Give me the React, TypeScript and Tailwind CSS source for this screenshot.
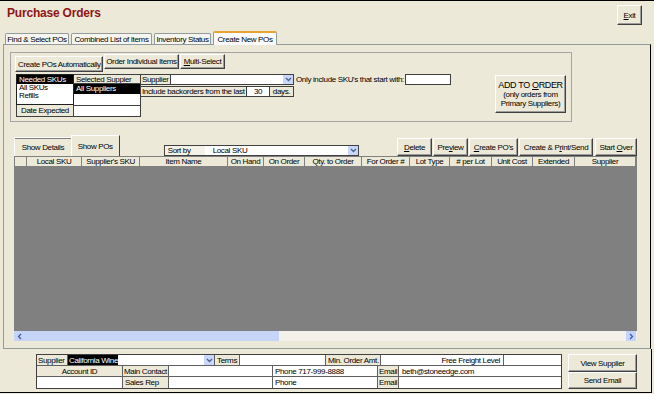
import React from 'react';

const raised =
  'border border-t-white border-l-white border-r-[#404040] border-b-[#404040] shadow-[inset_-1px_-1px_0_#9d9d9d]';

const Chevron = () => (
  <span className="w-[10px] h-full bg-[#C9D8FA] flex items-center justify-center shrink-0">
    <svg width="7" height="5" viewBox="0 0 7 5">
      <path d="M1 1l2.5 2.5L6 1" stroke="#4D6185" strokeWidth="1.3" fill="none" />
    </svg>
  </span>
);

const columns: [string, number][] = [
  ['', 12],
  ['Local SKU', 55],
  ["Supplier's SKU", 58],
  ['Item Name', 88],
  ['On Hand', 36],
  ['On Order', 41],
  ['Qty. to Order', 57],
  ['For Order #', 48],
  ['Lot Type', 40],
  ['# per Lot', 42],
  ['Unit Cost', 41],
  ['Extended', 42],
  ['Supplier', 63],
];

const MainTab = ({ label, w, active }: { label: string; w: number; active?: boolean }) =>
  active ? (
    <div
      style={{ width: w }}
      className="relative z-10 -mb-px h-[14px] bg-[#FCFCFE] border border-[#919B9C] border-b-0 border-t-2 border-t-[#E6A532] rounded-t-[2px] flex items-center justify-center"
    >
      {label}
    </div>
  ) : (
    <div
      style={{ width: w }}
      className="h-[11px] bg-[#F6F5F0] border border-[#919B9C] border-b-0 rounded-t-[2px] flex items-center justify-center"
    >
      {label}
    </div>
  );

const Btn = ({ w, h, children, className = '' }: { w: number; h: number; children: React.ReactNode; className?: string }) => (
  <div
    style={{ width: w, height: h }}
    className={`${raised} bg-[#ECE9D8] flex flex-col items-center justify-center leading-[9px] ${className}`}
  >
    {children}
  </div>
);

export default function App() {
  return (
    <div className="w-[654px] h-[394px] bg-[#ECE9D8] border-t border-black overflow-hidden whitespace-nowrap text-black text-[8px] leading-[9px] font-['Liberation_Sans',Arial,sans-serif] tracking-[-0.35px]">
      {/* Title bar */}
      <div className="flex h-[30px]">
        <div className="pl-[7px] pt-[5px] text-[12px] leading-[14px] font-bold text-[#8f1515] tracking-[-0.2px]">
          Purchase Orders
        </div>
        <div className={`${raised} ml-auto mt-[4px] mr-[12px] w-[25px] h-[20px] flex items-center justify-center`}>
          <span>
            <u>E</u>xit
          </span>
        </div>
      </div>

      {/* Main tabs */}
      <div className="flex items-end h-[13px] pl-[5px] gap-[2px]">
        <MainTab label="Find & Select POs" w={64} />
        <MainTab label="Combined List of Items" w={81} />
        <MainTab label="Inventory Status" w={57} />
        <MainTab label="Create New POs" w={64} active />
      </div>

      {/* Tab page */}
      <div className="ml-[3px] w-[648px] h-[305px] border border-[#919B9C] border-r-black">
        {/* Group box */}
        <div className="ml-[6px] mt-[7px] w-[562px] h-[70px] border border-[#A5A5A5]">
          <div className="flex items-start gap-[1px] pl-[4px] pt-[1px] h-[17px]">
            <div className={`${raised} w-[88px] h-[16px] mt-[2px] px-[2px] flex items-center overflow-hidden`}>
              Create POs Automatically
            </div>
            <div className={`${raised} w-[75px] h-[15px] flex items-center justify-center overflow-hidden`}>
              Order Individual Items
            </div>
            <div className={`${raised} w-[45px] h-[15px] flex items-center justify-center`}>
              <span>
                <u>M</u>ulti-Select
              </span>
            </div>
          </div>

          <div className="flex mt-[4px] pl-[5px]">
            {/* SKU list */}
            <div className="w-[58px] flex flex-col">
              <div className="h-[31px] border border-[#202020] bg-white flex flex-col">
                <div className="h-[9px] bg-black text-white pl-[2px]">Needed SKUs</div>
                <div className="h-[8px] pl-[2px] leading-[8px]">All SKUs</div>
                <div className="h-[8px] pl-[2px] leading-[8px]">Refills</div>
              </div>
              <div className="h-[12px] border border-t-0 border-[#404040] flex items-center justify-center">
                Date Expected
              </div>
            </div>

            {/* Supplier list */}
            <div className="w-[67px] flex flex-col">
              <div className="h-[10px] border border-l-0 border-[#404040] pl-[2px] flex items-center overflow-hidden">
                Selected Suppier
              </div>
              <div className="h-[21px] bg-white border-r border-[#404040]">
                <div className="h-[10px] bg-black text-white pl-[2px]">All Suppliers</div>
              </div>
              <div className="h-[12px] bg-white border border-l-0 border-[#404040]" />
            </div>

            {/* Fields */}
            <div className="flex flex-col gap-[1px]">
              <div className="flex h-[11px]">
                <div className="w-[30px] border border-l-0 border-[#404040] pl-[1px] flex items-center overflow-hidden">
                  Supplier
                </div>
                <div className="w-[123px] border border-l-0 border-[#404040] bg-white flex justify-end">
                  <Chevron />
                </div>
                <div className="w-[111px] pl-[2px] flex items-center overflow-hidden">
                  Only include SKU's that start with:
                </div>
                <div className="w-[46px] border border-[#404040] bg-white" />
              </div>
              <div className="flex h-[11px]">
                <div className="w-[106px] border border-l-0 border-[#404040] pl-[1px] flex items-center overflow-hidden">
                  Include backorders from the last
                </div>
                <div className="w-[23px] border border-l-0 border-[#404040] bg-white flex items-center justify-center">
                  30
                </div>
                <div className="w-[24px] border border-l-0 border-[#404040] flex items-center justify-center">
                  days.
                </div>
              </div>
            </div>

            <div className="ml-auto mr-[5px] mt-[1px]">
              <Btn w={71} h={38}>
                <span className="text-[9px] leading-[10px]">
                  ADD TO <u>O</u>RDER
                </span>
                <span>(only orders from</span>
                <span>Primary Suppliers)</span>
              </Btn>
            </div>
          </div>
        </div>

        {/* Details / grid */}
        <div className="mt-[13px] ml-[10px] w-[623px]">
          <div className="flex items-end h-[21px]">
            <div className="w-[57px] h-[19px] border-t border-l border-white shadow-[inset_0_1px_0_#808080] flex items-center justify-center">
              Show Details
            </div>
            <div className="w-[49px] h-[21px] border-t border-l border-r border-t-white border-l-white border-r-[#404040] flex items-center justify-center">
              Show POs
            </div>
            <div className="ml-[44px] w-[196px] h-[11px] flex border border-[#404040] bg-white">
              <div className="w-[40px] bg-[#F4F2E8] pl-[3px] flex items-center">Sort by</div>
              <div className="flex-1 pl-[8px] flex items-center">Local SKU</div>
              <Chevron />
            </div>
            <div className="ml-[38px] flex gap-[1px]">
              <Btn w={35} h={18}>
                <span>
                  <u>D</u>elete
                </span>
              </Btn>
              <Btn w={35} h={18}>
                <span>
                  Pre<u>v</u>iew
                </span>
              </Btn>
              <Btn w={49} h={18}>
                <span>
                  <u>C</u>reate PO's
                </span>
              </Btn>
              <Btn w={74} h={18}>
                <span>
                  Create &amp; P<u>r</u>int/Send
                </span>
              </Btn>
              <Btn w={42} h={18} className="ml-[1px]">
                <span>
                  Start <u>O</u>ver
                </span>
              </Btn>
            </div>
          </div>

          {/* Grid header */}
          <div className="flex h-[11px] bg-[#ECE9D8] border border-[#808080]">
            {columns.map(([name, w], i) => (
              <div
                key={i}
                style={{ width: i === columns.length - 1 ? w - 2 : w }}
                className="border-r border-[#808080] flex items-center justify-center overflow-hidden"
              >
                {name}
              </div>
            ))}
          </div>

          {/* Grid body */}
          <div className="h-[164px] bg-[#808080]" />

          {/* Scrollbar */}
          <div className="h-[10px] flex bg-[#F3F1EA]">
            <div className="w-[265px] bg-[#C6D5F7] pl-[3px] flex items-center">
              <svg width="5" height="7" viewBox="0 0 5 7">
                <path d="M4 1L1.5 3.5L4 6" stroke="#3D5B9A" strokeWidth="1.3" fill="none" />
              </svg>
            </div>
            <div className="flex-1" />
            <div className="w-[10px] mr-[1px] bg-[#C3D3FD] flex items-center justify-center">
              <svg width="5" height="7" viewBox="0 0 5 7">
                <path d="M1 1L3.5 3.5L1 6" stroke="#3D5B9A" strokeWidth="1.3" fill="none" />
              </svg>
            </div>
          </div>
        </div>
      </div>

      {/* Supplier info */}
      <div className="w-[652px] h-[44px] border-r border-b border-black pt-[5px] pl-[36px]">
        <div className="flex">
          <div className="w-[526px] border border-[#404040] flex flex-col">
            <div className="flex h-[11px] border-b border-[#606060]">
              <div className="w-[31px] border-r border-[#606060] pl-[1px] flex items-center overflow-hidden">Supplier</div>
              <div className="w-[147px] border-r border-[#606060] bg-white flex">
                <div className="w-[50px] bg-black text-white pl-[1px] flex items-center overflow-hidden">California Wine</div>
                <div className="flex-1" />
                <Chevron />
              </div>
              <div className="w-[25px] border-r border-[#606060] pl-[2px] flex items-center">Terms</div>
              <div className="w-[86px] border-r border-[#606060] bg-white" />
              <div className="w-[55px] border-r border-[#606060] pl-[2px] flex items-center overflow-hidden">
                Min. Order Amt.
              </div>
              <div className="w-[123px] border-r border-[#606060] bg-white flex items-center justify-end pr-[3px]">
                Free Freight Level
              </div>
              <div className="w-[57px] bg-white" />
            </div>
            <div className="flex h-[11px] border-b border-[#606060]">
              <div className="w-[86px] border-r border-[#606060] flex items-center justify-center">Account ID</div>
              <div className="w-[46px] border-r border-[#606060] pl-[1px] flex items-center overflow-hidden">Main Contact</div>
              <div className="w-[104px] border-r border-[#606060] bg-white" />
              <div className="w-[105px] border-r border-[#606060] bg-white flex items-center pl-[2px]">
                Phone&nbsp;717-999-8888
              </div>
              <div className="w-[21px] border-r border-[#606060] bg-[#ECE9D8] pl-[1px] flex items-center overflow-hidden">Email</div>
              <div className="w-[162px] bg-white pl-[3px] flex items-center">beth@stoneedge.com</div>
            </div>
            <div className="flex h-[11px]">
              <div className="w-[86px] border-r border-[#606060] bg-white" />
              <div className="w-[46px] border-r border-[#606060] pl-[2px] flex items-center">Sales Rep</div>
              <div className="w-[104px] border-r border-[#606060] bg-white" />
              <div className="w-[105px] border-r border-[#606060] bg-white flex items-center pl-[2px]">Phone</div>
              <div className="w-[21px] border-r border-[#606060] pl-[1px] flex items-center overflow-hidden">Email</div>
              <div className="w-[162px] bg-white" />
            </div>
          </div>
          <div className="ml-[6px] flex flex-col">
            <Btn w={69} h={18}>View Supplier</Btn>
            <Btn w={69} h={17}>Send Email</Btn>
          </div>
        </div>
      </div>
    </div>
  );
}
